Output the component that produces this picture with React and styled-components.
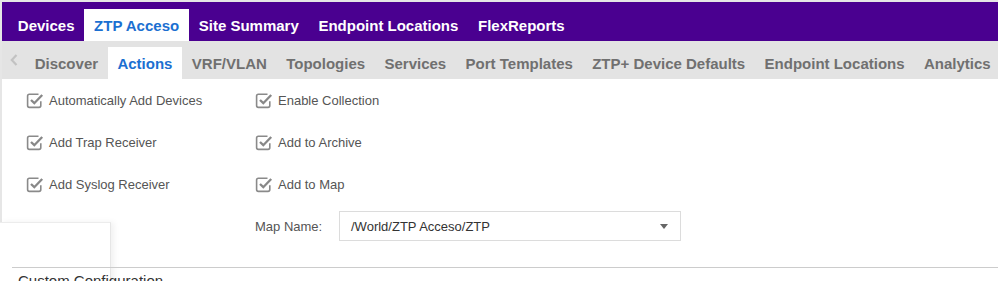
import React from "react";
import styled, { createGlobalStyle } from "styled-components";

const GlobalStyle = createGlobalStyle`
  html, body { margin: 0; padding: 0; }
  body {
    background: #e6e6e6;
    font-family: "Liberation Sans", Arial, sans-serif;
    overflow: hidden;
  }
`;

const Page = styled.div`
  position: relative;
  margin: 2px 0 0 2px;
  background: #ffffff;
  min-height: 400px;
`;

const TopNav = styled.nav`
  display: flex;
  align-items: flex-end;
  height: 39px;
  padding-left: 6px;
  background: #4a0090;
`;

const TopTab = styled.div`
  height: 32px;
  line-height: 33px;
  padding: 0 9.8px;
  font-size: 15px;
  font-weight: bold;
  color: ${(p) => (p.$active ? "#1b6fd1" : "#ffffff")};
  background: ${(p) => (p.$active ? "#ffffff" : "transparent")};
  white-space: nowrap;
`;

const SubNav = styled.nav`
  display: flex;
  align-items: flex-end;
  height: 38px;
  background: #e3e3e3;
  overflow: hidden;
`;

const ScrollArrow = styled.div`
  flex: 0 0 23px;
  height: 38px;
  display: flex;
  align-items: center;
  justify-content: center;
`;

const SubTab = styled.div`
  height: 32px;
  line-height: 33px;
  padding: 0 9.7px;
  font-size: 15px;
  font-weight: bold;
  color: ${(p) => (p.$active ? "#1b6fd1" : "#707070")};
  background: ${(p) => (p.$active ? "#ffffff" : "transparent")};
  white-space: nowrap;
`;

const Content = styled.div`
  position: relative;
  z-index: 1;
  padding-left: 24px;
`;

const OptionGrid = styled.div`
  display: grid;
  grid-template-columns: 229px auto;
  grid-auto-rows: 42px;
`;

const CheckItem = styled.label`
  display: flex;
  align-items: center;
  gap: 5px;
  font-size: 13px;
  color: #555555;
`;

const MapRow = styled.div`
  grid-column: 2;
  display: flex;
  align-items: center;
  font-size: 13px;
  color: #555555;
`;

const MapLabel = styled.span`
  width: 84px;
`;

const Select = styled.div`
  box-sizing: border-box;
  width: 342px;
  height: 30px;
  border: 1px solid #dcdcdc;
  display: flex;
  align-items: center;
  justify-content: space-between;
  padding: 0 12px 0 11px;
  color: #333333;
  font-size: 13px;
`;

const Caret = styled.span`
  width: 0;
  height: 0;
  border-left: 4.5px solid transparent;
  border-right: 4.5px solid transparent;
  border-top: 5px solid #666666;
`;

const Section = styled.div`
  position: relative;
  z-index: 1;
  margin: 20px 0 0 10px;
  border-top: 1px solid #cccccc;
  padding: 4px 0 0 6px;
  font-size: 15px;
  color: #333333;
`;

const Popup = styled.div`
  position: absolute;
  left: -2px;
  top: 220px;
  width: 110px;
  height: 120px;
  background: #ffffff;
  border-top: 1px solid #ececec;
  border-right: 1px solid #e6e6e6;
  box-shadow: 3px 0 6px rgba(0, 0, 0, 0.06);
  z-index: 0;
`;

const CheckIcon = () => (
  <svg width="18" height="18" viewBox="0 0 18 18">
    <path
      d="M12.5 3.2 H3.4 a1.8 1.8 0 0 0 -1.8 1.8 V14.6 a1.8 1.8 0 0 0 1.8 1.8 H13 a1.8 1.8 0 0 0 1.8 -1.8 V10.2"
      fill="none"
      stroke="#8a8a8a"
      strokeWidth="1.6"
    />
    <path
      d="M5 9 L8.3 12.2 L16.2 4"
      fill="none"
      stroke="#888888"
      strokeWidth="2.3"
    />
  </svg>
);

const ArrowLeft = () => (
  <svg width="8" height="12" viewBox="0 0 8 12">
    <path d="M6.5 1 L1.8 6 L6.5 11" fill="none" stroke="#c2c2c2" strokeWidth="2.2" />
  </svg>
);

const topTabs = ["Devices", "ZTP Acceso", "Site Summary", "Endpoint Locations", "FlexReports"];
const subTabs = [
  "Discover",
  "Actions",
  "VRF/VLAN",
  "Topologies",
  "Services",
  "Port Templates",
  "ZTP+ Device Defaults",
  "Endpoint Locations",
  "Analytics",
];
const options = [
  "Automatically Add Devices",
  "Enable Collection",
  "Add Trap Receiver",
  "Add to Archive",
  "Add Syslog Receiver",
  "Add to Map",
];

export default function App() {
  return (
    <>
      <GlobalStyle />
      <Page>
        <TopNav>
          {topTabs.map((t) => (
            <TopTab key={t} $active={t === "ZTP Acceso"}>
              {t}
            </TopTab>
          ))}
        </TopNav>
        <SubNav>
          <ScrollArrow>
            <ArrowLeft />
          </ScrollArrow>
          {subTabs.map((t) => (
            <SubTab key={t} $active={t === "Actions"}>
              {t}
            </SubTab>
          ))}
        </SubNav>
        <Popup />
        <Content>
          <OptionGrid>
            {options.map((o) => (
              <CheckItem key={o}>
                <CheckIcon />
                {o}
              </CheckItem>
            ))}
            <MapRow>
              <MapLabel>Map Name:</MapLabel>
              <Select>
                <span>/World/ZTP Acceso/ZTP</span>
                <Caret />
              </Select>
            </MapRow>
          </OptionGrid>
        </Content>
        <Section>Custom Configuration</Section>
      </Page>
    </>
  );
}
